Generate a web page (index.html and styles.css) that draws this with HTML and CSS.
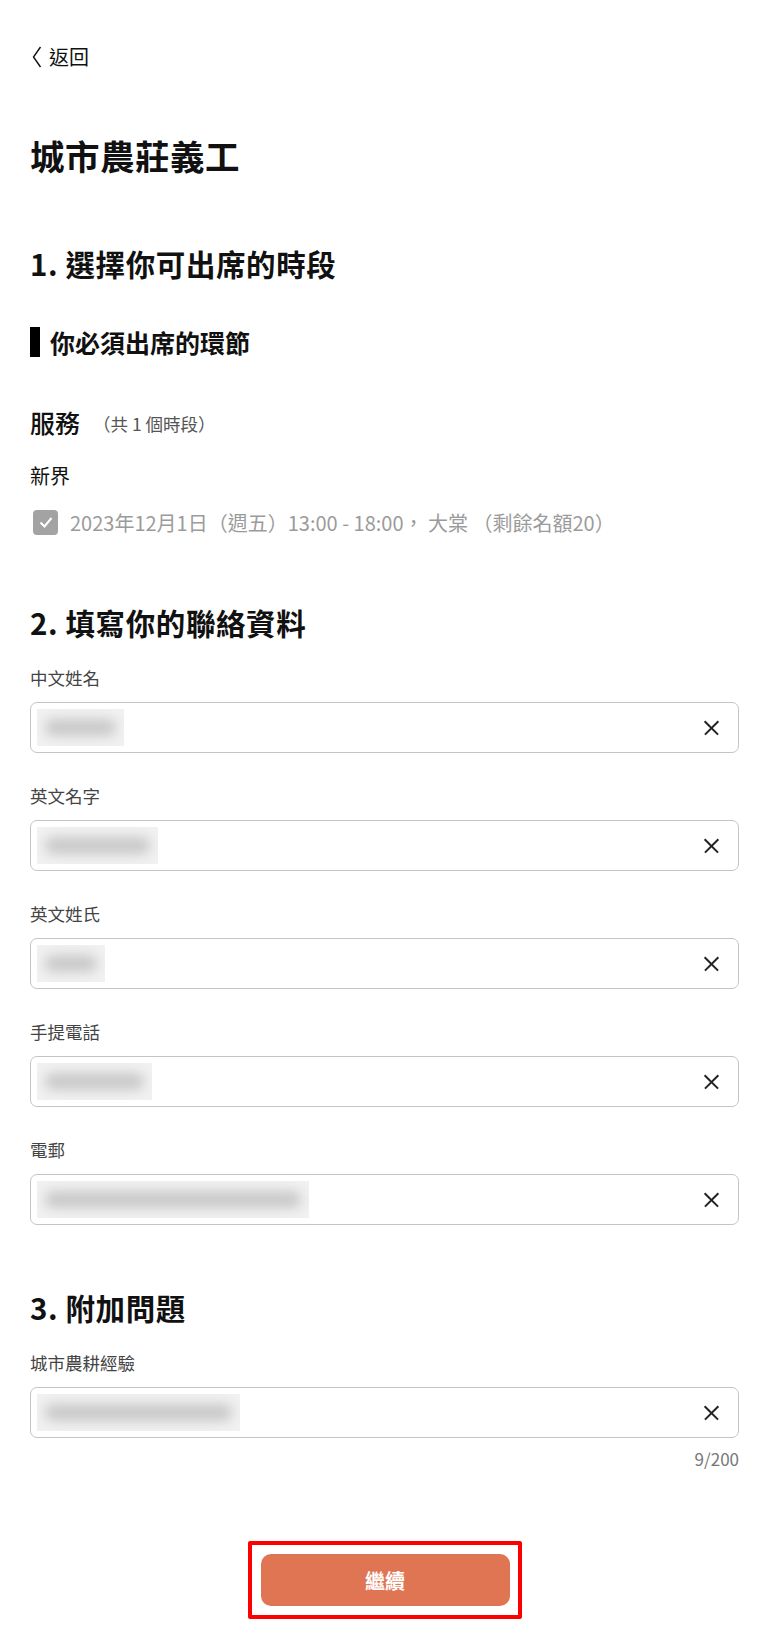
FILE: index.html
```html
<!DOCTYPE html>
<html lang="zh-Hant">
<head>
<meta charset="utf-8">
<title>城市農莊義工</title>
<link rel="stylesheet" href="styles.css">
</head>
<body>
<div class="page">
  <a class="back" href="#">
    <svg class="chev" width="10" height="22" viewBox="0 0 10 22"><path d="M8.5 1 L1.5 11 L8.5 21" fill="none" stroke="#111" stroke-width="1.4"/></svg>
    <span>返回</span>
  </a>

  <h1 class="title">城市農莊義工</h1>

  <h2 class="section">1. 選擇你可出席的時段</h2>

  <h3 class="sub">你必須出席的環節</h3>

  <div class="service"><span class="service-name">服務</span><span class="service-count">（共 1 個時段）</span></div>

  <div class="region">新界</div>

  <div class="slot">
    <span class="checkbox"><svg width="18" height="18" viewBox="0 0 18 18"><path d="M3.5 9.5 L7.5 13.5 L14.5 5" fill="none" stroke="#fff" stroke-width="2"/></svg></span>
    <span class="slot-text">2023年12月1日（週五）13:00 - 18:00， 大棠 （剩餘名額20）</span>
  </div>

  <h2 class="section s2">2. 填寫你的聯絡資料</h2>

  <div class="field">
    <div class="label">中文姓名</div>
    <div class="input"><span class="blur" style="width:87px"><i></i></span><span class="clear"></span></div>
  </div>
  <div class="field">
    <div class="label">英文名字</div>
    <div class="input"><span class="blur" style="width:121px"><i></i></span><span class="clear"></span></div>
  </div>
  <div class="field">
    <div class="label">英文姓氏</div>
    <div class="input"><span class="blur" style="width:68px"><i></i></span><span class="clear"></span></div>
  </div>
  <div class="field">
    <div class="label">手提電話</div>
    <div class="input"><span class="blur" style="width:115px"><i></i></span><span class="clear"></span></div>
  </div>
  <div class="field">
    <div class="label">電郵</div>
    <div class="input"><span class="blur" style="width:272px"><i></i></span><span class="clear"></span></div>
  </div>

  <h2 class="section s3">3. 附加問題</h2>

  <div class="field">
    <div class="label">城市農耕經驗</div>
    <div class="input"><span class="blur" style="width:203px"><i></i></span><span class="clear"></span></div>
  </div>
  <div class="counter">9/200</div>

  <div class="actions">
    <div class="highlight"><button class="btn">繼續</button></div>
  </div>
</div>
</body>
</html>
```

FILE: styles.css
```css
* { box-sizing: border-box; }
html, body { margin: 0; padding: 0; background: #fff; }
body {
  font-family: "Noto Sans CJK TC", "Noto Sans", sans-serif;
  color: #111;
}
.page {
  width: 780px;
  padding: 45px 41px 0 30px;
}
.back {
  display: flex;
  align-items: center;
  gap: 7px;
  height: 24px;
  padding-left: 2px;
  color: #111;
  text-decoration: none;
  font-size: 20px;
  line-height: 24px;
}
.chev { display: block; }
.title {
  margin: 62px 0 0;
  font-size: 34.5px;
  line-height: 48px;
  font-weight: 700;
  letter-spacing: 0.5px;
}
.section {
  margin: 64px 0 0;
  font-size: 29.5px;
  line-height: 40px;
  font-weight: 700;
  letter-spacing: 0.6px;
}
.sub {
  margin: 43px 0 0;
  display: flex;
  align-items: center;
  font-size: 25px;
  line-height: 32px;
  font-weight: 700;
}
.sub::before {
  content: "";
  width: 10px;
  height: 30px;
  background: #000;
  margin-right: 10px;
}
.service {
  margin-top: 47px;
  display: flex;
  align-items: center;
  height: 34px;
}
.service-name { font-size: 25px; font-weight: 500; }
.service-count { font-size: 17.5px; color: #555; margin-left: 13px; padding-top: 2px; }
.region {
  margin-top: 24px;
  font-size: 20px;
  line-height: 26px;
}
.slot {
  margin-top: 19px;
  display: flex;
  align-items: center;
  height: 28px;
  padding-left: 3px;
}
.checkbox {
  width: 25px;
  height: 25px;
  border-radius: 4px;
  background: #a3a3a3;
  display: flex;
  align-items: center;
  justify-content: center;
  flex: none;
}
.slot-text {
  margin-left: 12px;
  font-size: 20px;
  color: #9b9b9b;
  white-space: nowrap;
}
.s2 { margin-top: 66px; }
.s3 { margin-top: 62px; }
.field { margin-top: 24px; }
.field + .field { margin-top: 31px; }
.label {
  font-size: 17.5px;
  line-height: 24px;
  color: #444;
}
.input {
  margin-top: 12px;
  height: 51px;
  border: 1.5px solid #c4c4c4;
  border-radius: 7px;
  display: flex;
  align-items: center;
  justify-content: space-between;
  padding: 0 19px 0 6px;
}
.blur {
  display: block;
  height: 37px;
  background: #f1f1f1;
  overflow: hidden;
  position: relative;
}
.blur i {
  position: absolute;
  left: 8px;
  right: 8px;
  top: 10px;
  bottom: 10px;
  background: #c9c9c9;
  border-radius: 8px;
  filter: blur(6px);
}
.clear {
  width: 16px;
  height: 16px;
  position: relative;
  flex: none;
}
.clear::before, .clear::after {
  content: "";
  position: absolute;
  left: -1px;
  top: 7px;
  width: 19px;
  height: 1.5px;
  background: #222;
  transform: rotate(45deg);
}
.clear::after { transform: rotate(-45deg); }
.counter {
  margin-top: 10px;
  text-align: right;
  font-size: 17px;
  line-height: 22px;
  color: #777;
}
.actions {
  margin-top: 71px;
  display: flex;
  justify-content: center;
}
.highlight {
  border: 4px solid #ff0000;
  border-radius: 2px;
  padding: 9px 8px 9px 9px;
}
.btn {
  display: block;
  width: 249px;
  height: 52px;
  border: 0;
  border-radius: 10px;
  background: #df7553;
  color: #fff;
  font-family: "Noto Sans CJK TC", sans-serif;
  font-size: 20px;
  font-weight: 700;
}
```
